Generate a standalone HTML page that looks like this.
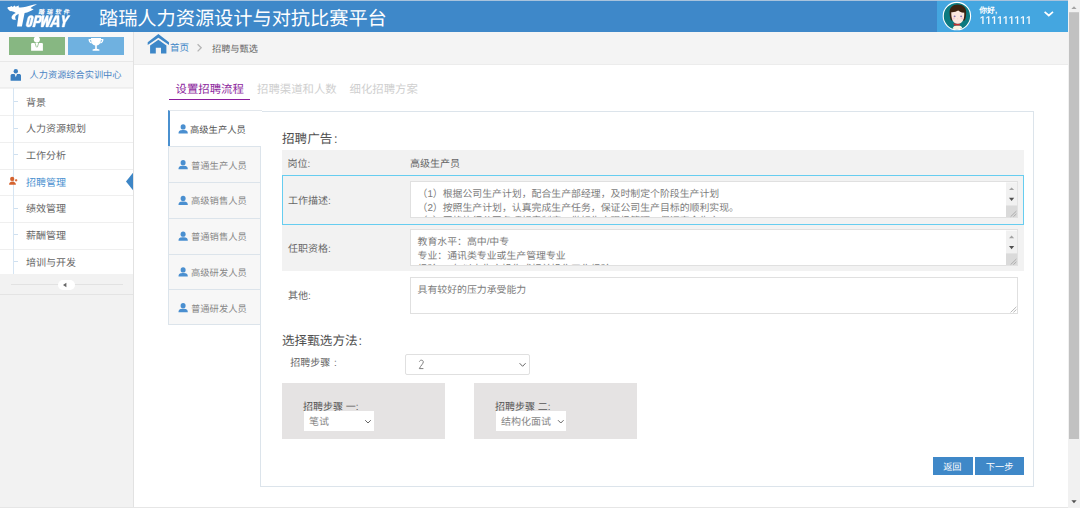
<!DOCTYPE html>
<html lang="zh-CN"><head><meta charset="utf-8">
<style>
*{margin:0;padding:0;box-sizing:border-box}
html,body{width:1080px;height:508px;overflow:hidden;background:#fff;font-family:"Liberation Sans",sans-serif;text-rendering:geometricPrecision}
.a{position:absolute}
#hdr{left:0;top:0;width:1068px;height:32px;background:#3e88c9;border-top:1px solid #a9c3dc}
#title{left:99px;top:7.4px;font-size:19.2px;color:#fff;white-space:nowrap;line-height:26px}
#user{left:937px;top:1px;width:131px;height:31px;background:#44a6e0}
#sb{left:1068px;top:0;width:12px;height:508px;background:#f1f1f1}
#side{left:0;top:32px;width:134px;height:476px;background:#f2f2f2;border-right:1px solid #e2e2e2}
#sidetop{left:0;top:32px;width:133px;height:29.6px;background:#f8f8f8;border-bottom:1px solid #e8e8e8}
.btn1{top:37px;width:56px;height:18px}
#center{left:0;top:61.6px;width:133px;height:26.8px;background:#f7f7f7;border-bottom:1px solid #eee}
#center span{position:absolute;left:29.6px;top:6.4px;font-size:9.2px;color:#4a84c4;white-space:nowrap;line-height:14px}
.item{left:0;width:133px;background:#fff}
.item span{position:absolute;left:26px;top:6px;font-size:10px;color:#666;white-space:nowrap;line-height:14px}
.tick{position:absolute;left:13px;top:13px;width:5px;height:1px;background:#cfe0f0}
#vline{left:13px;top:88px;width:1px;height:186px;background:#d6e5f3}
#collapse{left:0;top:274.2px;width:133px;height:20.8px;background:#f2f2f2;border-bottom:1px solid #e4e4e4}
#bc{left:134px;top:32px;width:934px;height:33px;background:#f4f4f4;border-bottom:1px solid #ececec}
.tab{top:82px;font-size:11.4px;white-space:nowrap;line-height:16px}
#panel{left:260px;top:110.8px;width:774px;height:376.2px;border:1px solid #dce4eb;background:#fff}
.vt{left:168px;width:93px;height:36px;background:#f7f7f7;border:1px solid #dce4eb;border-top:none}
.vt span{position:absolute;left:22px;top:11px;font-size:9.3px;color:#888;white-space:nowrap;line-height:13px}
.lbl{font-size:10px;color:#666;white-space:nowrap;line-height:14px}
.ta{background:#fff;border:1px solid #e0e0e0;overflow:hidden;font-size:9.9px;color:#7c7c7c;line-height:13.7px;padding:5.8px 6.5px}
.box{top:382.5px;width:163px;height:56.2px;background:#e5e3e3}
.sel{background:#fff;font-size:10px;color:#888;white-space:nowrap;line-height:14px}
.bbtn{top:457px;height:17.8px;background:#3f88c8;color:#fff;font-size:9.2px;text-align:center;line-height:21px;overflow:hidden}
</style></head><body>
<div id="hdr" class="a"></div>
<svg class="a" style="left:0;top:0" width="80" height="32" viewBox="0 0 80 32">
<g fill="#fff">
<path d="M7.3,8.1 L8.1,6.9 L9.5,7.1 L11.7,6.1 L12.6,6.9 L14.7,5.6 L15.5,6.7 L18.8,5.6 L18.7,7.3 C20.5,7.9 23,7.4 26,6.8 C29.5,6 33,4.4 37,4.3 C34.6,5.4 32.2,6.8 30.6,8.1 L31.4,8.6 L33.7,9.2 C31,11 28,12.3 24.6,13 L21.9,26.6 L17,26.6 L18.7,13.9 L16.5,13.4 C15.5,12.6 14.5,12 13.7,11.7 C12.5,11.4 11,11.3 10.1,11 C9,10.5 8.2,9.5 7.3,8.1 Z"/>
<path d="M17,12.8 C13.8,13.6 11.4,15.6 11.6,17.9 C11.8,19.3 13.4,19.9 16.2,19.8 C15.4,19.1 15.1,18 15.3,16.8 C15.5,15.4 16.6,14.5 18.9,13.9 Z"/>
<g transform="translate(0,26.9) skewX(-14) translate(0,-26.9)" fill-rule="evenodd" stroke="#fff" stroke-width="0.45" stroke-linejoin="round">
<path d="M28.2,15.6 L28.6,15.6 C30.2,15.6 31.2,16.6 31.2,18.2 L31.2,24.3 C31.2,25.9 30.2,26.9 28.6,26.9 L28.2,26.9 C26.6,26.9 25.6,25.9 25.6,24.3 L25.6,18.2 C25.6,16.6 26.6,15.6 28.2,15.6 Z M28.1,17.8 C27.9,17.8 27.8,18 27.8,18.3 L27.8,24.2 C27.8,24.5 27.9,24.7 28.1,24.7 L28.7,24.7 C28.9,24.7 29.0,24.5 29.0,24.2 L29.0,18.3 C29.0,18 28.9,17.8 28.7,17.8 Z"/>
<path d="M32.6,26.9 L32.6,15.6 L37.2,15.6 C38.8,15.6 39.6,16.6 39.6,18.4 L39.6,20.4 C39.6,22.2 38.8,23.1 37.2,23.1 L34.9,23.1 L34.9,26.9 Z M34.9,17.6 L36.8,17.6 C37.2,17.6 37.4,17.9 37.4,18.4 L37.4,20.3 C37.4,20.8 37.2,21.1 36.8,21.1 L34.9,21.1 Z"/>
<path d="M39.2,15.6 L41.5,15.6 L42.2,22.6 L43.6,15.6 L45.6,15.6 L46.8,22.6 L47.8,15.6 L50.1,15.6 L48.2,26.9 L45.9,26.9 L44.6,20.4 L43.3,26.9 L41,26.9 Z"/>
<path d="M49.6,26.9 L52.6,15.6 L56.2,15.6 L59.2,26.9 L56.8,26.9 L56.3,24.6 L52.5,24.6 L52,26.9 Z M53,22.7 L55.8,22.7 L54.4,17.4 Z"/>
<path d="M59.2,15.6 L61.6,15.6 L63.2,20.3 L64.9,15.6 L67.3,15.6 L64.3,22.4 L64.3,26.9 L62,26.9 L62,22.4 Z"/>
</g>
<text x="38.5" y="14" font-weight="bold" font-size="6" textLength="31" lengthAdjust="spacing" transform="skewX(-10) translate(2.2,0)">踏瑞软件</text>
</g></svg>
<div id="title" class="a">踏瑞人力资源设计与对抗比赛平台</div>
<div id="user" class="a"></div>
<svg class="a" style="left:940px;top:0" width="34" height="34" viewBox="0 0 34 34">
<circle cx="16.9" cy="16.1" r="13.7" fill="#0c7a80" stroke="#fff" stroke-width="1.1"/>
<clipPath id="cc"><circle cx="16.9" cy="16.1" r="13.2"/></clipPath>
<g clip-path="url(#cc)">
<path d="M12.5,30 C12.8,26.5 14,25.6 17.6,25.6 C21.2,25.6 22.2,26.5 22.6,30 Z" fill="#f8f4e2"/>
<path d="M13.2,23.6 L20.4,23.6 L19.6,25.6 L14.2,25.6 Z" fill="#c42f2e"/>
<path d="M9.6,13 C9.4,7.5 12.6,4.6 17.8,4.6 C23,4.6 26.4,7.5 26.2,13 C26.1,16.5 25.5,19 24.6,20.5 L11.2,20.5 C10.2,19 9.7,16.5 9.6,13 Z" fill="#3c2311"/>
<path d="M11.3,12.2 C13.5,12.6 16.5,11.6 18.3,10.6 C19.5,12 22,12.8 24.2,12.6 C24.4,15 24.2,18 23,20.5 C21.8,22.8 20,23.8 17.8,23.8 C15.6,23.8 13.8,22.8 12.6,20.5 C11.5,18.2 11.2,15 11.3,12.2 Z" fill="#fce7de"/>
<ellipse cx="14.6" cy="16.3" rx="1" ry="0.9" fill="#8677b8"/>
<ellipse cx="21.1" cy="16.3" rx="1" ry="0.9" fill="#8677b8"/>
<ellipse cx="13.6" cy="18.4" rx="1.4" ry="0.8" fill="#f9c8d0"/>
<ellipse cx="22.1" cy="18.4" rx="1.4" ry="0.8" fill="#f9c8d0"/>
<path d="M17.5,18.6 L18.2,18.6 L17.85,19.4 Z" fill="#f0a8a0"/>
</g></svg>
<div class="a" style="left:979.3px;top:6.4px;font-size:7.8px;font-weight:bold;color:#fff;line-height:10px;white-space:nowrap">你好,</div>
<svg class="a" style="left:0;top:0" width="1068" height="32"><path fill="#fff" fill-opacity="0.92" d="M982.27,16.2 L983.63,16.2 L983.63,24 L982.27,24 Z M982.27,16.2 L982.27,17.5 L980.45,18.8 L980.45,17.6 Z M988.04,16.2 L989.39,16.2 L989.39,24 L988.04,24 Z M988.04,16.2 L988.04,17.5 L986.22,18.8 L986.22,17.6 Z M993.80,16.2 L995.16,16.2 L995.16,24 L993.80,24 Z M993.80,16.2 L993.80,17.5 L991.98,18.8 L991.98,17.6 Z M999.57,16.2 L1000.92,16.2 L1000.92,24 L999.57,24 Z M999.57,16.2 L999.57,17.5 L997.75,18.8 L997.75,17.6 Z M1005.33,16.2 L1006.69,16.2 L1006.69,24 L1005.33,24 Z M1005.33,16.2 L1005.33,17.5 L1003.51,18.8 L1003.51,17.6 Z M1011.10,16.2 L1012.46,16.2 L1012.46,24 L1011.10,24 Z M1011.10,16.2 L1011.10,17.5 L1009.28,18.8 L1009.28,17.6 Z M1016.86,16.2 L1018.22,16.2 L1018.22,24 L1016.86,24 Z M1016.86,16.2 L1016.86,17.5 L1015.04,18.8 L1015.04,17.6 Z M1022.63,16.2 L1023.99,16.2 L1023.99,24 L1022.63,24 Z M1022.63,16.2 L1022.63,17.5 L1020.81,18.8 L1020.81,17.6 Z M1028.39,16.2 L1029.75,16.2 L1029.75,24 L1028.39,24 Z M1028.39,16.2 L1028.39,17.5 L1026.57,18.8 L1026.57,17.6 Z"/></svg>
<svg class="a" style="left:1043px;top:10px" width="12" height="8" viewBox="0 0 12 8"><path d="M1.6,1.8 L5.8,5.5 L10,1.8" fill="none" stroke="#fff" stroke-width="1.7"/></svg>
<div id="sb" class="a"></div>

<div id="side" class="a"></div>
<div id="sidetop" class="a"></div>
<div class="a btn1" style="left:9px;background:#87b782"></div>
<div class="a btn1" style="left:68px;background:#6fb1e0"></div>
<svg class="a" style="left:0;top:32px" width="133" height="29" viewBox="0 32 133 29">
<g fill="#fff">
<circle cx="36.85" cy="39.6" r="3.05"/>
<path d="M31.1,50.7 L31.1,44.3 C31.1,43.6 31.6,43.1 32.3,43.1 L41.7,43.1 C42.4,43.1 42.9,43.6 42.9,44.3 L42.9,50.7 Z"/>
<path d="M35,43 L36.4,47.3 M38.7,43 L37.3,47.3" stroke="#87b782" stroke-width="0.75" fill="none"/>
<path d="M91,38 L101,38 L101,39.4 C101,42.8 99.2,45 96.8,45.6 L96.8,48.8 L99.4,49.6 L99.4,50.8 L92.6,50.8 L92.6,49.6 L95.2,48.8 L95.2,45.6 C92.8,45 91,42.8 91,39.4 Z"/>
<path d="M91.2,39 L88.6,39 C88.4,41.6 89.6,43 91.6,43.4 L91.8,42.2 C90.6,41.8 90,41.2 90,40.2 L91.2,40.2 Z"/>
<path d="M100.8,39 L103.4,39 C103.6,41.6 102.4,43 100.4,43.4 L100.2,42.2 C101.4,41.8 102,41.2 102,40.2 L100.8,40.2 Z"/>
</g></svg>
<div id="center" class="a"><span>人力资源综合实训中心</span></div>
<svg class="a" style="left:0;top:61px" width="30" height="27" viewBox="0 61 30 27"><g fill="#3a7fc0">
<circle cx="15.8" cy="71.2" r="2.2"/>
<path d="M10.6,80.8 L10.6,75.6 C10.6,74.4 11.4,73.9 12.6,73.9 L14.6,73.9 L15.8,77.2 L17,73.9 L19,73.9 C20.2,73.9 21,74.4 21,75.6 L21,80.8 Z"/></g></svg>

<div class="a item" style="top:88.60px;height:26.66px;"><i class="tick" style="top:12.4px"></i><span style="top:8.2px;">背景</span></div>
<div class="a item" style="top:115.26px;height:26.66px;border-top:1px solid #efefef;"><i class="tick" style="top:11.4px"></i><span style="top:7px;">人力资源规划</span></div>
<div class="a item" style="top:141.92px;height:26.66px;border-top:1px solid #efefef;"><i class="tick" style="top:11.4px"></i><span style="top:7px;">工作分析</span></div>
<div class="a item" style="top:168.58px;height:26.66px;border-top:1px solid #efefef;"><span style="top:7px;color:#4a90d0;">招聘管理</span></div>
<div class="a item" style="top:195.24px;height:26.66px;border-top:1px solid #efefef;"><i class="tick" style="top:11.4px"></i><span style="top:7px;">绩效管理</span></div>
<div class="a item" style="top:221.90px;height:26.66px;border-top:1px solid #efefef;"><i class="tick" style="top:11.4px"></i><span style="top:7px;">薪酬管理</span></div>
<div class="a item" style="top:248.56px;height:26.66px;border-top:1px solid #efefef;"><i class="tick" style="top:11.4px"></i><span style="top:7px;">培训与开发</span></div>
<div id="vline" class="a"></div>
<svg class="a" style="left:0;top:168px" width="133" height="27" viewBox="0 168 133 27">
<g fill="#d4622f"><ellipse cx="12.2" cy="178.9" rx="2.1" ry="2.2"/><path d="M9.1,184.7 C9.1,182.7 10.3,181.8 12.3,181.6 C14.4,181.8 15.9,182.7 15.9,184.7 Z"/>
<path d="M14.9,179.8 L15.6,179.8 L15.6,179.1 L16.6,179.1 L16.6,179.8 L17.3,179.8 L17.3,180.8 L16.6,180.8 L16.6,181.5 L15.6,181.5 L15.6,180.8 L14.9,180.8 Z"/></g>
<path d="M133.5,172 L126,181.5 L133.5,191 Z" fill="#3d86c6"/></svg>
<div id="collapse" class="a"></div>
<div class="a" style="left:11px;top:284px;width:112px;height:1px;background:#e2e2e2"></div>
<div class="a" style="left:58px;top:280px;width:17px;height:10px;border-radius:5px;background:#fff"></div>
<svg class="a" style="left:58px;top:280px" width="17" height="10"><path d="M5,5 L8.4,2.8 L8.4,7.2 Z" fill="#666"/></svg>

<div id="bc" class="a"></div>
<svg class="a" style="left:140px;top:32px" width="70" height="30" viewBox="140 32 70 30"><g fill="#3d87c8">
<path d="M147.7,42.3 L158.36,33.9 L169,42.3 L169,45.1 L158.36,37.8 L147.7,45.1 Z"/>
<path d="M150.1,45.6 L158.36,39.7 L166.4,45.6 L166.4,53.5 L161,53.5 L161,47.8 L155.8,47.8 L155.8,53.5 L150.1,53.5 Z"/></g>
<path d="M197.6,44.2 L201.2,47.8 L197.6,51.4" fill="none" stroke="#b5b5b5" stroke-width="1.3"/></svg>
<div class="a" style="left:170px;top:42px;font-size:9.5px;color:#3f87c8;line-height:14px">首页</div>
<div class="a" style="left:212px;top:42px;font-size:9.2px;color:#666;line-height:14px;white-space:nowrap">招聘与甄选</div>

<div class="a tab" style="left:175.5px;color:#8e2a9e">设置招聘流程</div>
<div class="a" style="left:168.5px;top:98.7px;width:81.7px;height:1.7px;background:#8c1d9c"></div>
<div class="a tab" style="left:257px;color:#cfcfcf">招聘渠道和人数</div>
<div class="a tab" style="left:349.5px;color:#cfcfcf">细化招聘方案</div>

<div id="panel" class="a"></div>
<div class="a vt" style="top:110.40px;height:35.85px;width:94px;background:#fff;border-top:1px solid #e2e7ec;border-left:2px solid #4a90cf;border-right:none;border-bottom:none"><span style="color:#555;top:12.3px;left:20px">高级生产人员</span></div>
<div class="a vt" style="top:146.25px;height:35.75px;border-top:1px solid #dce4eb;border-bottom:none"><span style="top:12.3px">普通生产人员</span></div>
<div class="a vt" style="top:182.00px;height:35.75px;border-top:1px solid #dce4eb;border-bottom:none"><span style="top:12.3px">高级销售人员</span></div>
<div class="a vt" style="top:217.75px;height:35.75px;border-top:1px solid #dce4eb;border-bottom:none"><span style="top:12.3px">普通销售人员</span></div>
<div class="a vt" style="top:253.50px;height:35.75px;border-top:1px solid #dce4eb;border-bottom:none"><span style="top:12.3px">高级研发人员</span></div>
<div class="a vt" style="top:289.25px;height:35.75px;border-top:1px solid #dce4eb;border-bottom:1px solid #dce4eb"><span style="top:12.3px">普通研发人员</span></div>
<svg class="a" style="left:0;top:0" width="260" height="330"><g fill="#4a8fd0"><ellipse cx="183.1" cy="126.90" rx="2.5" ry="2.7"/><path d="M178.5,133.60 C178.5,130.70 180.2,130.10 183.1,130.10 C186,130.10 187.8,130.70 187.8,133.60 Z"/><ellipse cx="183.1" cy="162.65" rx="2.5" ry="2.7"/><path d="M178.5,169.35 C178.5,166.45 180.2,165.85 183.1,165.85 C186,165.85 187.8,166.45 187.8,169.35 Z"/><ellipse cx="183.1" cy="198.40" rx="2.5" ry="2.7"/><path d="M178.5,205.10 C178.5,202.20 180.2,201.60 183.1,201.60 C186,201.60 187.8,202.20 187.8,205.10 Z"/><ellipse cx="183.1" cy="234.15" rx="2.5" ry="2.7"/><path d="M178.5,240.85 C178.5,237.95 180.2,237.35 183.1,237.35 C186,237.35 187.8,237.95 187.8,240.85 Z"/><ellipse cx="183.1" cy="269.90" rx="2.5" ry="2.7"/><path d="M178.5,276.60 C178.5,273.70 180.2,273.10 183.1,273.10 C186,273.10 187.8,273.70 187.8,276.60 Z"/><ellipse cx="183.1" cy="305.65" rx="2.5" ry="2.7"/><path d="M178.5,312.35 C178.5,309.45 180.2,308.85 183.1,308.85 C186,308.85 187.8,309.45 187.8,312.35 Z"/></g></svg>

<div class="a" style="left:282px;top:130.8px;font-size:12.6px;color:#505050;line-height:17px;white-space:nowrap">招聘广告<span style="margin-left:1.5px">:</span></div>
<div class="a" style="left:282px;top:150px;width:742px;height:121.4px;background:#f2f2f2"></div>
<div class="a" style="left:282px;top:175px;width:742px;height:50px;border:1px solid #66cdf0"></div>
<div class="a lbl" style="left:287.5px;top:157.6px">岗位:</div>
<div class="a lbl" style="left:410px;top:157.6px">高级生产员</div>
<div class="a lbl" style="left:288px;top:194.6px">工作描述:</div>
<div class="a ta" style="left:410px;top:181px;width:608px;height:37px">（1）根据公司生产计划，配合生产部经理，及时制定个阶段生产计划<br>（2）按照生产计划，认真完成生产任务，保证公司生产目标的顺利实现。<br>（3）严格执行公司各项规章制度，做好生产现场管理，保证安全生产</div>
<div class="a lbl" style="left:288px;top:242.8px">任职资格:</div>
<div class="a ta" style="left:410px;top:229px;width:608px;height:37px">教育水平：高中/中专<br>专业：通讯类专业或生产管理专业<br>经验：2年以上生产操作或相关操作工作经验</div>
<div class="a lbl" style="left:288px;top:289.8px">其他:</div>
<div class="a ta" style="left:410px;top:277px;width:608px;height:37px">具有较好的压力承受能力</div>

<div class="a" style="left:282px;top:333.2px;font-size:12.6px;color:#505050;line-height:17px;white-space:nowrap">选择甄选方法<span style="margin-left:1px">:</span></div>
<div class="a lbl" style="left:290.3px;top:356.9px">招聘步骤<span style="margin-left:3.6px">:</span></div>
<div class="a sel" style="left:405px;top:354.2px;width:124.6px;height:20.6px;border:1px solid #e0e0e0;border-radius:2px"></div>
<svg class="a" style="left:405px;top:354px" width="125" height="21"><path d="M14.4,7.6 C14.8,6.6 15.6,6.2 16.4,6.2 C17.6,6.2 18.3,7 18.3,7.9 C18.3,9.6 15.8,11.6 14.3,14.6 L18.4,14.6" fill="none" stroke="#777" stroke-width="0.95"/><path d="M114.6,9.2 L117.6,12.3 L120.6,9.2" fill="none" stroke="#666" stroke-width="1"/></svg>
<div class="a box" style="left:282px"></div>
<div class="a box" style="left:474px"></div>
<div class="a lbl" style="left:303px;top:400.5px;color:#555">招聘步骤 一:</div>
<div class="a sel" style="left:303.9px;top:410.9px;width:70.2px;height:20.2px;padding:2.3px 5px 0;line-height:20px;overflow:hidden">笔试</div>
<svg class="a" style="left:360px;top:415px" width="14" height="12"><path d="M5.2,5.2 L8,8 L10.8,5.2" fill="none" stroke="#666" stroke-width="1"/></svg>
<div class="a lbl" style="left:495px;top:400.5px;color:#555">招聘步骤 二:</div>
<div class="a sel" style="left:496px;top:411px;width:70.2px;height:20.4px;padding:2.3px 5px 0;line-height:20px;overflow:hidden">结构化面试</div>
<svg class="a" style="left:552px;top:415px" width="14" height="12"><path d="M6,5.2 L8.8,8 L11.6,5.2" fill="none" stroke="#666" stroke-width="1"/></svg>

<svg class="a" style="left:0;top:0" width="1080" height="508"><rect x="1006" y="182.4" width="11.2" height="35.0" fill="#f1f1f1"/><path d="M1009,190.0 L1014.2,190.0 L1011.6,187.4 Z" fill="#a3a3a3"/><path d="M1009,197.8 L1014.2,197.8 L1011.6,201.1 Z" fill="#505050"/><rect x="1006" y="205.5" width="11.2" height="11.9" fill="#dadada"/><path d="M1010.6,216.7 L1016.4,211.1 M1013.4,216.7 L1016.4,213.9" stroke="#9a9a9a" stroke-width="0.7" fill="none"/><rect x="1006" y="230.6" width="11.2" height="34.7" fill="#f1f1f1"/><path d="M1009,238.2 L1014.2,238.2 L1011.6,235.6 Z" fill="#a3a3a3"/><path d="M1009,246.0 L1014.2,246.0 L1011.6,249.3 Z" fill="#505050"/><rect x="1006" y="253.4" width="11.2" height="11.9" fill="#dadada"/><path d="M1010.6,264.6 L1016.4,259.0 M1013.4,264.6 L1016.4,261.8" stroke="#9a9a9a" stroke-width="0.7" fill="none"/><path d="M1010.6,312.4 L1016.4,306.8 M1013.4,312.4 L1016.4,309.6" stroke="#9a9a9a" stroke-width="0.7" fill="none"/></svg>
<svg class="a" style="left:1068px;top:0" width="12" height="508">
<rect x="1" y="12.2" width="10" height="426.8" fill="#c1c1c1"/>
<path d="M3.4,9 L8.6,9 L6,6.2 Z" fill="#a3a3a3"/>
<path d="M3.4,500.3 L8.6,500.3 L6,503.3 Z" fill="#505050"/>
</svg>
<div class="a" style="left:0;top:507px;width:1068px;height:1px;background:#e6e6e6"></div>
<div class="a bbtn" style="left:933.3px;width:39.3px;padding-right:1.2px">返回</div>
<div class="a bbtn" style="left:975.3px;width:48.6px">下一步</div>
</body></html>
